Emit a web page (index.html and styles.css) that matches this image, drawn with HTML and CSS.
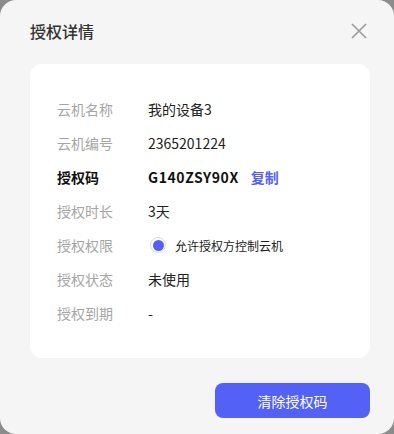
FILE: index.html
```html
<!DOCTYPE html>
<html lang="zh-CN">
<head>
    <meta charset="UTF-8">
    <meta name="viewport" content="width=device-width, initial-scale=1.0">
    <title>授权详情</title>
    <link rel="stylesheet" href="styles.css">
</head>
<body>
    <div class="dialog">
        <div class="dialog-header">
            <span class="dialog-title">授权详情</span>
            <span class="close-btn">
                <svg width="16" height="16" viewBox="0 0 16 16">
                    <path d="M1 1 L15 15 M15 1 L1 15" stroke="#9a9a9a" stroke-width="1.6" fill="none"/>
                </svg>
            </span>
        </div>

        <div class="info-card">
            <div class="info-row">
                <span class="info-label">云机名称</span>
                <span class="info-value">我的设备3</span>
            </div>
            <div class="info-row">
                <span class="info-label">云机编号</span>
                <span class="info-value">2365201224</span>
            </div>
            <div class="info-row strong">
                <span class="info-label">授权码</span>
                <span class="info-value code">G140ZSY90X</span>
                <span class="copy-link">复制</span>
            </div>
            <div class="info-row">
                <span class="info-label">授权时长</span>
                <span class="info-value">3天</span>
            </div>
            <div class="info-row">
                <span class="info-label">授权权限</span>
                <span class="radio"><span class="radio-dot"></span></span>
                <span class="radio-text">允许授权方控制云机</span>
            </div>
            <div class="info-row">
                <span class="info-label">授权状态</span>
                <span class="info-value">未使用</span>
            </div>
            <div class="info-row">
                <span class="info-label">授权到期</span>
                <span class="info-value">-</span>
            </div>
        </div>

        <div class="dialog-footer">
            <button class="clear-btn">清除授权码</button>
        </div>
    </div>
</body>
</html>
```

FILE: styles.css
```css
html, body {
    margin: 0;
    padding: 0;
}
body {
    background-color: #8c8c8c;
    font-family: "Noto Sans CJK SC", "Noto Sans", sans-serif;
    width: 394px;
    height: 434px;
    overflow: hidden;
}
.dialog {
    background-color: #f5f5f5;
    border-radius: 16px;
    height: 434px;
    box-sizing: border-box;
    padding: 0 24px 0 30px;
    display: flex;
    flex-direction: column;
}
.dialog-header {
    display: flex;
    align-items: center;
    justify-content: space-between;
    height: 62px;
}
.dialog-title {
    font-size: 16px;
    font-weight: 500;
    color: #333;
}
.close-btn {
    display: flex;
    width: 16px;
    height: 16px;
    margin-right: 3px;
    cursor: pointer;
}
.info-card {
    background-color: #fff;
    border-radius: 12px;
    margin: 2px 0 0 0;
    width: 340px;
    box-sizing: border-box;
    padding: 28px 27px;
}
.info-row {
    display: flex;
    align-items: center;
    height: 34px;
    font-size: 14px;
}
.info-label {
    width: 91px;
    color: #a5a5a5;
}
.info-value {
    color: #222;
}
.info-row.strong .info-label,
.info-row.strong .info-value {
    color: #111;
    font-weight: bold;
}
.code {
    letter-spacing: 0.6px;
}
.copy-link {
    color: #5461f6;
    font-weight: bold;
    margin-left: 12px;
    cursor: pointer;
}
.radio {
    width: 16px;
    height: 16px;
    border: 1px solid #dcdcdc;
    border-radius: 50%;
    box-sizing: border-box;
    display: flex;
    align-items: center;
    justify-content: center;
    margin-left: 2px;
}
.radio-dot {
    width: 11px;
    height: 11px;
    border-radius: 50%;
    background-color: #5461f6;
}
.radio-text {
    font-size: 12px;
    color: #222;
    margin-left: 9px;
}
.dialog-footer {
    display: flex;
    justify-content: flex-end;
    margin-top: 25px;
}
.clear-btn {
    width: 155px;
    height: 35px;
    border: none;
    border-radius: 8px;
    background-color: #5461f6;
    color: #fff;
    font-family: inherit;
    font-size: 14px;
    cursor: pointer;
}
```
